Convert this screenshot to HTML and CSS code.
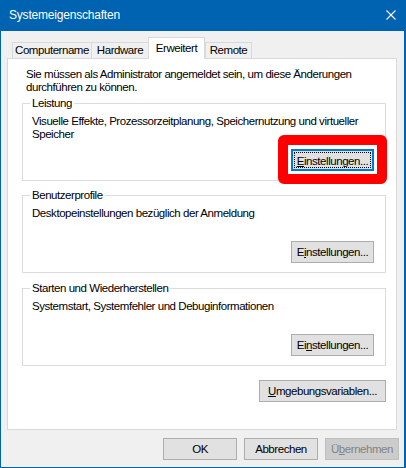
FILE: index.html
```html
<!DOCTYPE html>
<html lang="de">
<head>
<meta charset="utf-8">
<title>Systemeigenschaften</title>
<link rel="stylesheet" href="styles.css">
</head>
<body>
<div class="window">
  <div class="titlebar">
    <span class="title">Systemeigenschaften</span>
    <svg class="close" width="10" height="10" viewBox="0 0 10 10" aria-hidden="true">
      <path d="M0.5 0.5 L9.5 9.5 M9.5 0.5 L0.5 9.5" stroke="#fff" stroke-width="1.1" fill="none"/>
    </svg>
  </div>
  <div class="client">
    <div class="tabs">
      <div class="tab tab-computer">Computername</div>
      <div class="tab tab-hardware">Hardware</div>
      <div class="tab tab-advanced active">Erweitert</div>
      <div class="tab tab-remote">Remote</div>
    </div>
    <div class="panel">
      <p class="intro">Sie müssen als Administrator angemeldet sein, um diese Änderungen<br>durchführen zu können.</p>

      <fieldset class="group group-first">
        <legend>Leistung</legend>
        <div class="group-body">
          <p class="desc">Visuelle Effekte, Prozessorzeitplanung, Speichernutzung und virtueller<br>Speicher</p>
          <span class="btn-wrap">
            <button class="btn btn-set default"><u>E</u>instellungen...</button>
            <span class="highlight"></span>
          </span>
        </div>
      </fieldset>

      <fieldset class="group group-second">
        <legend>Benutzerprofile</legend>
        <div class="group-body">
          <p class="desc">Desktopeinstellungen bezüglich der Anmeldung</p>
          <span class="btn-wrap">
            <button class="btn btn-set">E<u>i</u>nstellungen...</button>
          </span>
        </div>
      </fieldset>

      <fieldset class="group group-third">
        <legend>Starten und Wiederherstellen</legend>
        <div class="group-body">
          <p class="desc">Systemstart, Systemfehler und Debuginformationen</p>
          <span class="btn-wrap">
            <button class="btn btn-set">Ei<u>n</u>stellungen...</button>
          </span>
        </div>
      </fieldset>

      <div class="env-row">
        <button class="btn btn-env"><u>U</u>mgebungsvariablen...</button>
      </div>
    </div>
    <div class="footer">
      <button class="btn btn-foot">OK</button>
      <button class="btn btn-foot">Abbrechen</button>
      <button class="btn btn-foot disabled">Ü<u>b</u>ernehmen</button>
    </div>
  </div>
</div>
</body>
</html>
```

FILE: styles.css
```css
html, body {
  margin: 0;
  padding: 0;
  background: #ffffff;
}

body {
  font-family: "Liberation Sans", Arial, sans-serif;
  font-size: 11.5px;
  letter-spacing: -0.45px;
  color: #000;
}

.window {
  width: 406px;
  height: 468px;
  box-sizing: border-box;
  border-left: 1px solid #0063b1;
  border-right: 2px solid #0063b1;
  border-bottom: 1px solid #0063b1;
  display: flex;
  flex-direction: column;
}

.titlebar {
  height: 31px;
  flex: none;
  background: #0063b1;
  color: #fff;
  display: flex;
  align-items: center;
  justify-content: space-between;
  padding-left: 8px;
  padding-right: 8px;
}

.title {
  font-size: 12px;
  letter-spacing: -0.2px;
  line-height: 16px;
  padding-bottom: 1px;
}

.close {
  display: block;
  margin-top: -1px;
}

.client {
  flex: 1;
  background: #f0f0f0;
  padding: 6px 7px 0 6px;
  display: flex;
  flex-direction: column;
}

/* Tabs */
.tabs {
  display: flex;
  align-items: flex-end;
  padding-left: 5px;
  height: 22px;
}

.tab {
  box-sizing: border-box;
  height: 17px;
  border: 1px solid #d9d9d9;
  border-bottom: none;
  background: #f0f0f0;
  text-align: center;
  line-height: 14px;
  white-space: nowrap;
}

.tab + .tab {
  margin-left: -1px;
}

.tab-computer { width: 80px; }
.tab-hardware { width: 58px; }
.tab-advanced { width: 57px; }
.tab-remote { width: 47px; margin-left: 0 !important; }

.tab.active {
  height: 22px;
  padding-top: 3px;
  background: #fff;
  position: relative;
  z-index: 2;
}

/* Panel */
.panel {
  box-sizing: border-box;
  height: 372px;
  margin-top: -1px;
  border: 1px solid #d9d9d9;
  background: #fff;
  display: flex;
  flex-direction: column;
}

.intro {
  margin: 9px 0 0 18px;
  line-height: 13px;
}

.group {
  margin: 0 10px 0 14px;
  padding: 5px 11px 9px 7px;
  border: 1px solid #dcdcdc;
  min-width: 0;
}

.group-first { margin-top: 3px; }
.group-second { margin-top: 8px; }
.group-third { margin-top: 9px; }

.group legend {
  padding: 0 2px;
  line-height: 13px;
}

.group-body {
  height: 56px;
  padding-left: 2px;
  display: flex;
  flex-direction: column;
}

.desc {
  margin: 0;
  line-height: 13px;
}

.btn-wrap {
  margin-top: auto;
  align-self: flex-end;
  position: relative;
  display: block;
  height: 22px;
}

.btn {
  box-sizing: border-box;
  height: 22px;
  padding: 0;
  margin: 0;
  border: 1px solid #adadad;
  background: #e1e1e1;
  color: #000;
  font-family: inherit;
  font-size: 11.5px;
  letter-spacing: -0.45px;
  line-height: 20px;
  text-align: center;
  display: block;
}

.btn u {
  text-decoration: underline;
  text-underline-offset: 1px;
}

.btn-set { width: 83px; }

.btn.default {
  border: 2px solid #0078d7;
  outline: 1px dotted #000;
  outline-offset: -4px;
}

.highlight {
  position: absolute;
  left: -13px;
  top: -14px;
  width: 109px;
  height: 49px;
  box-sizing: border-box;
  border: 10px solid #ff0000;
  border-radius: 6px;
  pointer-events: none;
}

.env-row {
  display: flex;
  justify-content: flex-end;
  margin: 14px 10px 0 0;
}

.btn-env { width: 127px; }

/* Footer buttons */
.footer {
  display: flex;
  justify-content: flex-end;
  gap: 7px;
  margin-top: 8px;
  margin-right: -2px;
}

.btn-foot { width: 74px; }

.btn.disabled {
  background: #cccccc;
  border-color: #bfbfbf;
  color: #838383;
}
```
